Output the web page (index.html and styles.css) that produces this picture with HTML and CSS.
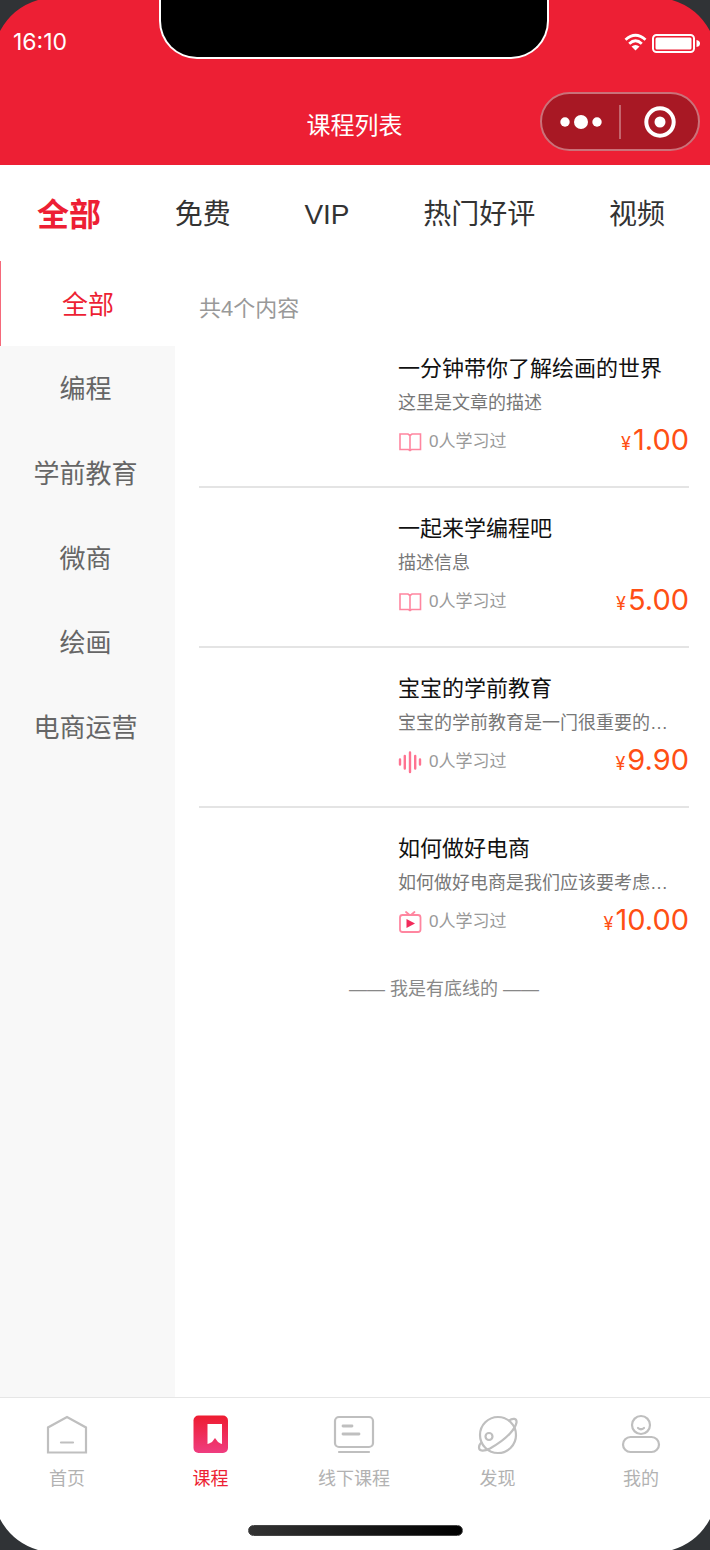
FILE: index.html
```html
<!DOCTYPE html>
<html lang="zh-CN">
<head>
<meta charset="utf-8">
<meta name="viewport" content="width=device-width, initial-scale=1">
<title>课程列表</title>
<link rel="stylesheet" href="styles.css">
</head>
<body>
<div class="screen">
  <header class="header">
    <div class="status">
      <span class="time">16:10</span>
      <div class="notch"></div>
      <svg class="signals" width="76" height="20" viewBox="0 0 76 20">
        <g fill="none" stroke="#fff" stroke-width="2.8">
          <path d="M1.500 6.800Q11.500 -2.200 21.500 6.800"/>
          <path d="M5.200 10.800Q11.500 4.800 17.800 10.800"/>
        </g>
        <path d="M7.500 13.600Q11.500 10.200 15.500 13.600L11.500 17.500Z" fill="#fff"/>
        <rect x="29" y="2" width="41" height="17" rx="3.500" fill="none" stroke="#fff" stroke-width="2"/>
        <rect x="31.500" y="4.500" width="36" height="12" rx="1.500" fill="#fff"/>
        <path d="M72.500 7Q76 7.500 76 10.500T72.500 14Z" fill="#fff"/>
      </svg>
    </div>
    <div class="navbar">
      <h1 class="title">课程列表</h1>
      <div class="capsule">
        <button class="capsule-button" type="button" aria-label="更多">
          <svg width="42" height="16" viewBox="0 0 42 16" fill="#fff"><circle cx="5" cy="8" r="4.700"/><circle cx="21" cy="8" r="7"/><circle cx="37" cy="8" r="4.700"/></svg>
        </button>
        <button class="capsule-button" type="button" aria-label="关闭">
          <svg width="32" height="32" viewBox="0 0 32 32"><circle cx="16" cy="16" r="13.700" fill="none" stroke="#fff" stroke-width="4"/><circle cx="16" cy="16" r="5.500" fill="#fff"/></svg>
        </button>
      </div>
    </div>
  </header>

  <nav class="tabs">
    <a class="tab tab-active" href="#">全部</a>
    <a class="tab" href="#">免费</a>
    <a class="tab" href="#">VIP</a>
    <a class="tab" href="#">热门好评</a>
    <a class="tab" href="#">视频</a>
  </nav>

  <div class="content">
    <aside class="sidebar">
      <nav class="categories">
        <a class="category category-active" href="#">全部</a>
        <a class="category" href="#">编程</a>
        <a class="category" href="#">学前教育</a>
        <a class="category" href="#">微商</a>
        <a class="category" href="#">绘画</a>
        <a class="category" href="#">电商运营</a>
      </nav>
    </aside>
    <main class="main">
      <p class="count">共4个内容</p>
      <article class="course">
        <div class="cover"></div>
        <div class="info">
          <h2 class="name">一分钟带你了解绘画的世界</h2>
          <p class="desc">这里是文章的描述</p>
          <div class="meta">
            <svg class="kind" width="24" height="24" viewBox="0 0 24 24" fill="none" stroke="#ff86a0" stroke-width="1.600"><path d="M12 20.500L10.500 19.500H2V4H10L12 5.500L14 4H22.500V19.500H13.500ZM12 5.500V20.500"/></svg>
            <span class="learned">0人学习过</span>
            <span class="price"><small class="yen">¥</small>1.00</span>
          </div>
        </div>
      </article>
      <article class="course">
        <div class="cover"></div>
        <div class="info">
          <h2 class="name">一起来学编程吧</h2>
          <p class="desc">描述信息</p>
          <div class="meta">
            <svg class="kind" width="24" height="24" viewBox="0 0 24 24" fill="none" stroke="#ff86a0" stroke-width="1.600"><path d="M12 20.500L10.500 19.500H2V4H10L12 5.500L14 4H22.500V19.500H13.500ZM12 5.500V20.500"/></svg>
            <span class="learned">0人学习过</span>
            <span class="price"><small class="yen">¥</small>5.00</span>
          </div>
        </div>
      </article>
      <article class="course">
        <div class="cover"></div>
        <div class="info">
          <h2 class="name">宝宝的学前教育</h2>
          <p class="desc">宝宝的学前教育是一门很重要的…</p>
          <div class="meta">
            <svg class="kind" width="24" height="24" viewBox="0 0 24 24" fill="none" stroke="#ff7391" stroke-width="2.400" stroke-linecap="round"><path d="M2 9.500V14.500M6.800 6V18.500M12 2.500V22M17.200 6V18.500M22 9.500V14.500"/></svg>
            <span class="learned">0人学习过</span>
            <span class="price"><small class="yen">¥</small>9.90</span>
          </div>
        </div>
      </article>
      <article class="course">
        <div class="cover"></div>
        <div class="info">
          <h2 class="name">如何做好电商</h2>
          <p class="desc">如何做好电商是我们应该要考虑…</p>
          <div class="meta">
            <svg class="kind" width="24" height="24" viewBox="0 0 24 24" fill="none" stroke="#ff86a0" stroke-width="1.800" stroke-linecap="round"><rect x="2" y="5" width="20.500" height="17" rx="2.500"/><path d="M8 2L11 4.500M16.500 2L13.500 4.500"/><path d="M8.500 9V18L17 13.500Z" fill="#f22b5b" stroke="none"/></svg>
            <span class="learned">0人学习过</span>
            <span class="price"><small class="yen">¥</small>10.00</span>
          </div>
        </div>
      </article>
      <p class="end">—— 我是有底线的 ——</p>
    </main>
  </div>

  <footer class="footer">
    <nav class="tabbar">
      <a class="item" href="#">
        <svg width="42" height="42" viewBox="0 0 42 42" fill="none" stroke="#bfbfbf" stroke-width="2.200"><path d="M2 38.500V13.500L21 3L40 13.500V38.500Z"/><path d="M15 28.500H27" stroke-linecap="round"/></svg>
        首页
      </a>
      <a class="item item-active" href="#">
        <svg width="42" height="42" viewBox="0 0 42 42"><defs><linearGradient id="book" x1="0" y1="0" x2="0" y2="1"><stop offset="0" stop-color="#ee1c30"/><stop offset="1" stop-color="#ef3d80"/></linearGradient></defs><rect x="3.500" y="1.500" width="34.500" height="37.500" rx="5" fill="url(#book)"/><path d="M17.500 10H32V30L30.500 29.500L28 28L25 24L22 28L19 29.500L17.500 30Z" fill="#fff"/></svg>
        课程
      </a>
      <a class="item" href="#">
        <svg width="42" height="42" viewBox="0 0 42 42" fill="none" stroke="#bfbfbf" stroke-width="2.200" stroke-linecap="round"><rect x="2" y="3" width="38" height="30" rx="4"/><path d="M6 38H36"/><path d="M10 12H19M10 20H26" stroke-width="2.800"/></svg>
        线下课程
      </a>
      <a class="item" href="#">
        <svg width="42" height="42" viewBox="0 0 42 42" fill="none" stroke="#bfbfbf" stroke-width="2.200"><circle cx="21" cy="21" r="18"/><circle cx="12" cy="22.500" r="3.500"/><path d="M31.500 7C36 3.500 40 4.500 39.500 8.500C39 12 37 15 33 19.500C28 25 21 30 13 34.500C7 37.500 2 37.500 2 33.500C2 31 3 29.500 5 28.500"/></svg>
        发现
      </a>
      <a class="item" href="#">
        <svg width="42" height="42" viewBox="0 0 42 42" fill="none" stroke="#bfbfbf" stroke-width="2.200" stroke-linecap="round"><circle cx="21" cy="11" r="9"/><path d="M18 14Q21 16.500 24 14"/><rect x="3" y="23" width="36" height="15" rx="7.500"/></svg>
        我的
      </a>
    </nav>
    <div class="home-bar"></div>
  </footer>

  <svg class="corner corner-tl" width="38" height="32" viewBox="0 0 38 32"><path d="M0 0H38A64 64 0 0 0 0 31Z"/></svg>
  <svg class="corner corner-tr" width="38" height="32" viewBox="0 0 38 32"><path d="M0 0H38A64 64 0 0 0 0 31Z"/></svg>
  <svg class="corner corner-bl" width="38" height="32" viewBox="0 0 38 32"><path d="M0 0H38A64 64 0 0 0 0 31Z"/></svg>
  <svg class="corner corner-br" width="38" height="32" viewBox="0 0 38 32"><path d="M0 0H38A64 64 0 0 0 0 31Z"/></svg>
</div>
</body>
</html>
```
FILE: styles.css
```css
* { box-sizing: border-box; }

body {
  margin: 0;
  background: #fff;
  font-family: "Liberation Sans", "Noto Sans CJK SC", sans-serif;
  color: #333;
}

h1, h2, p { margin: 0; font-weight: 400; }
a { color: inherit; text-decoration: none; }

.screen {
  position: relative;
  display: flex;
  flex-direction: column;
  min-height: 100vh;
  overflow: hidden;
}

.header { background: #ed1f34; color: #fff; padding-bottom: 14px; }

.status {
  display: grid;
  grid-template-columns: 1fr 390px 1fr;
  padding-right: 2px;
}

.time {
  align-self: end;
  padding: 0 0 4px 13px;
  font-family: Inter, sans-serif;
  font-size: 23px;
  line-height: 26px;
}

.notch {
  height: 59px;
  background: #000;
  border: 2px solid #fff;
  border-top: 0;
  border-radius: 0 0 38px 38px;
}

.signals { justify-self: end; align-self: end; margin: 0 8px 6px 0; }

.navbar {
  display: grid;
  grid-template-columns: 1fr auto 1fr;
  align-items: center;
  padding: 33px 10px 0 9px;
}

.title {
  grid-column: 2;
  padding-top: 8px;
  font-size: 24px;
  line-height: 32px;
}

.capsule {
  display: flex;
  justify-self: end;
  align-items: center;
  width: 160px;
  height: 59px;
  border: 2px solid #cb7179;
  border-radius: 30px;
  background: #a81824;
}

.capsule-button {
  display: flex;
  flex: 1;
  align-items: center;
  justify-content: center;
  height: 34px;
  padding: 0;
  border: 0;
  background: none;
}

.capsule-button + .capsule-button { border-left: 2px solid #c4656d; }

.tabs {
  display: flex;
  align-items: center;
  justify-content: space-between;
  height: 96px;
  padding: 4px 45px 0 37px;
}

.tab { font-size: 28px; line-height: 40px; }
.tab-active { font-size: 32px; font-weight: 700; color: #ed1f34; }

.content { display: flex; flex: 1; }

.sidebar { flex: 0 0 175px; background: #f8f8f8; }

.categories {
  display: grid;
  grid-auto-rows: 1fr;
  height: 508px;
}

.category {
  display: flex;
  align-items: center;
  justify-content: center;
  padding: 0 4px 2px 0;
  font-size: 26px;
  color: #666;
}

.category-active {
  padding-right: 0;
  border-left: 1px solid #f5697a;
  background: #fff;
  color: #ed1f34;
}

.main { flex: 1; min-width: 0; padding: 0 21px 0 24px; }

.count {
  padding: 32px 0 3px;
  font-size: 22px;
  line-height: 32px;
  color: #999;
}

.course {
  display: flex;
  gap: 19px;
  height: 160px;
  padding-top: 25px;
  border-bottom: 2px solid #e4e4e4;
}

.course:last-of-type { height: 140px; border-bottom: 0; }
.cover { flex: 0 0 180px; }
.info { flex: 1; min-width: 0; }
.name { font-size: 22px; line-height: 32px; color: #111; }

.desc {
  padding: 4px 0;
  font-size: 18px;
  line-height: 28px;
  color: #777;
}

.meta { display: flex; align-items: center; }
.kind { flex: none; margin-right: 7px; }
.learned { flex: 1; font-size: 17px; line-height: 40px; color: #999; }
.price { font-family: Inter, sans-serif; font-size: 29px; line-height: 38px; color: #ff4f14; }
.yen { margin-right: 2px; font-size: 18px; }

.end {
  padding-top: 25px;
  font-size: 18px;
  line-height: 32px;
  text-align: center;
  color: #888;
}

.footer { border-top: 1px solid #e6e6e6; padding-bottom: 14px; background: #fff; }

.tabbar {
  display: flex;
  justify-content: space-between;
  padding: 16px 32px 0 30px;
}

.item {
  display: flex;
  flex-direction: column;
  align-items: center;
  gap: 10px;
  width: 74px;
  font-size: 18px;
  line-height: 26px;
  color: #b2b2b2;
}

.item-active { color: #ed1f34; }

.home-bar {
  width: 215px;
  height: 11px;
  margin: 33px auto 0;
  border: 1px solid #444;
  border-radius: 6px;
  background: linear-gradient(90deg, #333, #000);
}

.corner { position: absolute; fill: #303336; }
.corner-tl { top: 0; left: 0; }
.corner-tr { top: 0; right: 0; transform: scaleX(-1); }
.corner-bl { bottom: 0; left: 0; transform: scaleY(-1); }
.corner-br { right: 0; bottom: 0; transform: scale(-1, -1); }
```
